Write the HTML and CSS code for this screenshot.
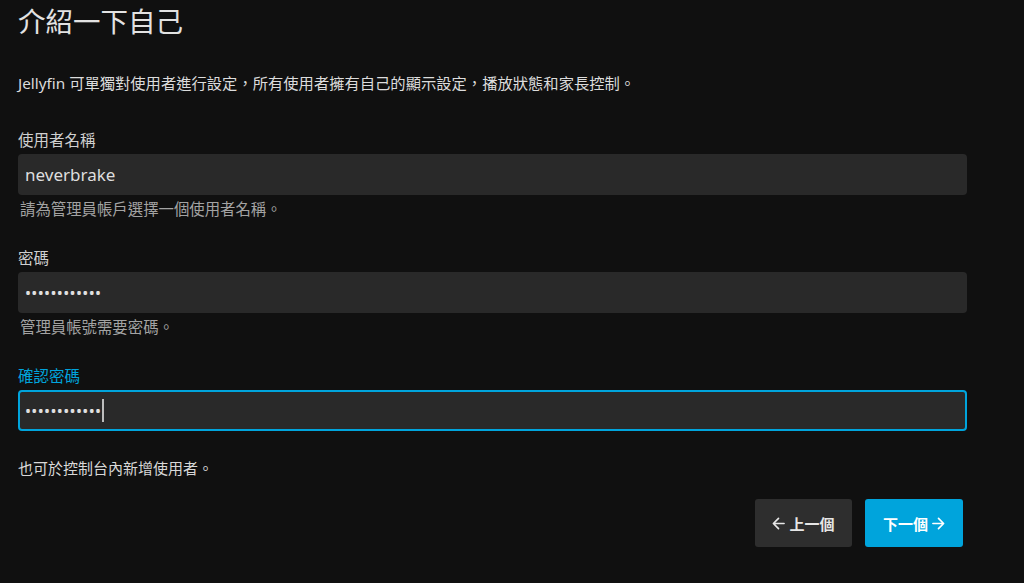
FILE: index.html
```html
<!DOCTYPE html>
<html lang="zh-Hant">
<head>
<meta charset="utf-8">
<title>介紹一下自己</title>
<link rel="stylesheet" href="styles.css">
</head>
<body>
<main class="page">
  <h1 class="title">介紹一下自己</h1>
  <p class="intro">Jellyfin 可單獨對使用者進行設定，所有使用者擁有自己的顯示設定，播放狀態和家長控制。</p>

  <div class="field">
    <label class="label" for="u">使用者名稱</label>
    <input class="input" id="u" type="text" value="neverbrake">
    <div class="help">請為管理員帳戶選擇一個使用者名稱。</div>
  </div>

  <div class="field">
    <label class="label" for="p">密碼</label>
    <div class="input"><span class="dots">••••••••••••</span></div>
    <div class="help">管理員帳號需要密碼。</div>
  </div>

  <div class="field">
    <label class="label label-focus" for="c">確認密碼</label>
    <div class="input input-focus"><span class="dots">••••••••••••</span><span class="caret"></span></div>
  </div>

  <p class="note">也可於控制台內新增使用者。</p>

  <div class="actions">
    <button class="btn btn-prev" type="button">
      <svg class="arrow" viewBox="0 0 14 14" width="13" height="13"><path d="M13 7H1.8M7 1.5L1.5 7 7 12.5" fill="none" stroke="currentColor" stroke-width="1.8" stroke-linecap="round" stroke-linejoin="round"/></svg>
      <span>上一個</span>
    </button>
    <button class="btn btn-next" type="button">
      <span>下一個</span>
      <svg class="arrow" viewBox="0 0 14 14" width="13" height="13"><path d="M1 7h11.2M7 1.5L12.5 7 7 12.5" fill="none" stroke="currentColor" stroke-width="1.8" stroke-linecap="round" stroke-linejoin="round"/></svg>
    </button>
  </div>
</main>
</body>
</html>
```

FILE: styles.css
```css
* { box-sizing: border-box; }

html, body {
  margin: 0;
  padding: 0;
  background: #101010;
  height: 100%;
}

body {
  font-family: "Noto Sans", "Noto Sans CJK TC", sans-serif;
  color: #d6d6d6;
  overflow: hidden;
}

.page {
  display: flex;
  flex-direction: column;
  padding: 6px 57px 0 18px;
}

.title {
  margin: 0;
  font-size: 27.5px;
  line-height: 32px;
  font-weight: 400;
  color: #e2e2e2;
}

.intro {
  margin: 34px 0 0;
  font-size: 15.3px;
  line-height: 22px;
  color: #dcdcdc;
}

.field {
  display: flex;
  flex-direction: column;
  margin-top: 34px;
}

.field + .field {
  margin-top: 26px;
}

.label {
  font-size: 15.5px;
  line-height: 24px;
  color: #cfcfcf;
}

.label-focus {
  color: #00a4dc;
}

.input {
  display: flex;
  align-items: center;
  margin-top: 2px;
  height: 41px;
  width: 100%;
  padding: 0 7px;
  border: 0;
  border-radius: 4px;
  background: #292929;
  color: #dedede;
  font-family: "Noto Sans", "Noto Sans CJK TC", sans-serif;
  font-size: 17px;
  outline: none;
}

.input-focus {
  border: 2px solid #00a4dc;
  padding: 0 5px;
}

.dots {
  font-size: 16px;
  letter-spacing: 0.35px;
  color: #e0e0e0;
}

.caret {
  display: inline-block;
  width: 1.5px;
  height: 23px;
  background: #bdbdbd;
  margin-left: 1px;
}

.help {
  margin-top: 5px;
  padding-left: 2px;
  font-size: 15.4px;
  line-height: 20px;
  color: #a3a3a3;
}

.note {
  margin: 26px 0 0;
  font-size: 15px;
  line-height: 22px;
  color: #d8d8d8;
}

.actions {
  display: flex;
  justify-content: flex-end;
  gap: 13px;
  margin-top: 20px;
  padding-right: 4px;
}

.btn {
  display: flex;
  align-items: center;
  justify-content: center;
  gap: 4px;
  height: 48px;
  width: 97px;
  border: 0;
  border-radius: 3px;
  font-family: "Noto Sans", "Noto Sans CJK TC", sans-serif;
  font-size: 15px;
  font-weight: 700;
  cursor: pointer;
}

.btn-prev {
  background: #2e2e2e;
  color: #e6e6e6;
}

.btn-next {
  width: 98px;
  background: #00a4dc;
  color: #ffffff;
}

.arrow {
  display: block;
}
```
